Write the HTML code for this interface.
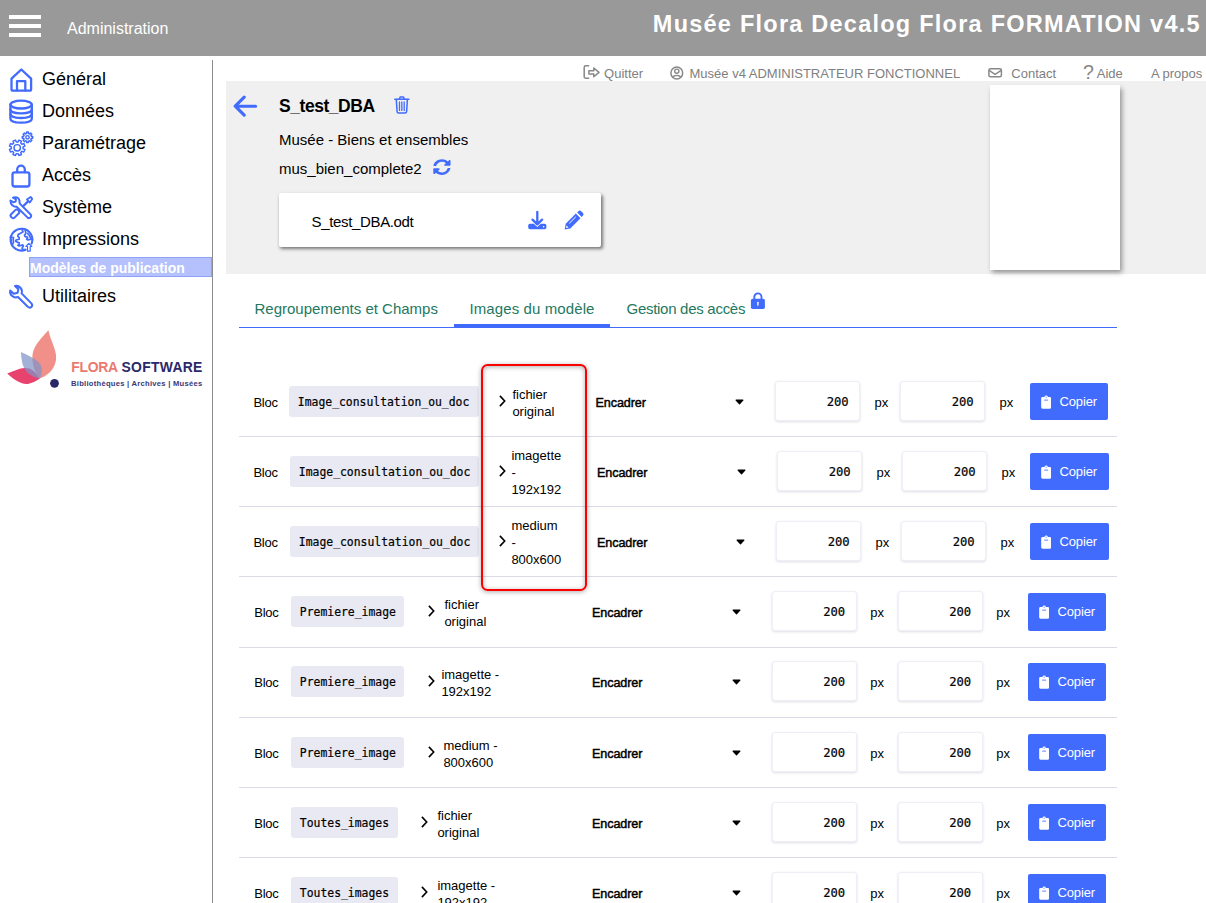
<!DOCTYPE html>
<html lang="fr">
<head>
<meta charset="utf-8">
<title>Administration - Modèles de publication</title>
<style>
*{box-sizing:border-box;margin:0;padding:0}
html,body{width:1206px;height:903px;overflow:hidden;background:#fff}
body{position:relative;font-family:"Liberation Sans",sans-serif;color:#000}
.abs{position:absolute;white-space:nowrap}
#hdr{left:0;top:0;width:1206px;height:56px;background:#999}
#hdr .bar{position:absolute;left:9px;width:32px;height:4px;background:#fff}
#adm{left:67px;top:19px;font-size:16px;color:#fff;line-height:20px}
#ttl{right:5.2px;top:8px;font-size:23.5px;font-weight:bold;color:#fff;line-height:32px;letter-spacing:1.24px}
#vline{left:212px;top:60px;width:1px;height:843px;background:#8c8c8c}
.mi{left:42px;font-size:18px;line-height:22px;color:#000}
#sel{left:29px;top:257px;width:183px;height:20px;background:#b4c1fc;border:1px solid #8ea3f7;color:#fff;font-weight:bold;font-size:14px;line-height:21px;padding-left:0}
.top{top:66px;font-size:13px;color:#808080;line-height:16px}
#gbox{left:226px;top:81px;width:980px;height:192.5px;background:#f0f0f0}
#wbox{left:990px;top:85px;width:130px;height:185px;background:#fff;box-shadow:2px 2.5px 5px rgba(0,0,0,.4)}
#card{left:279px;top:193px;width:322px;height:53.5px;background:#fff;border-radius:2px;box-shadow:1.5px 2px 3.5px rgba(0,0,0,.5)}
.tab{top:299px;font-size:15px;color:#23795f;line-height:20px}
#tline{left:239px;top:327px;width:878px;height:1px;background:#416bfd}
#tact{left:454px;top:323.5px;width:156px;height:4px;background:#416bfd}
.row{position:absolute;left:239px;width:878px;height:71px;border-bottom:1px solid #dcdce8}
.row .a{position:absolute;white-space:nowrap;font-size:13px;line-height:17px}
.row .enc{font-size:12.6px;letter-spacing:-0.1px;-webkit-text-stroke:.45px #000}
.row .code{background:#e9e9f4;border-radius:3px;height:31px;line-height:32.4px;font-family:"DejaVu Sans Mono","Liberation Mono",monospace;font-size:11.4px;padding:0 8.85px;-webkit-text-stroke:.2px #000}
.row .inp{background:#fff;border:1px solid #efeff8;border-radius:3px;width:85px;height:40px;box-shadow:0 1px 2.5px rgba(50,50,93,.16);font-family:"DejaVu Sans Mono","Liberation Mono",monospace;font-size:12.2px;line-height:41.1px;text-align:right;padding-right:10.5px;-webkit-text-stroke:.2px #000}
.row .btn{background:#416bfd;color:#fff;height:37px;border-radius:2px;font-size:13px;line-height:38.4px;padding-left:29.5px;letter-spacing:-0.15px}
.chv{position:absolute}
.clip{position:absolute;left:10.5px;top:12px}
#red{left:480.5px;top:364px;width:106.5px;height:226.7px;border:2.4px solid #ff0000;border-radius:6.5px;box-shadow:0 1px 5px rgba(0,0,0,.32),inset 0 1px 5px rgba(0,0,0,.32)}
.flo{font-weight:bold;font-size:13.9px;line-height:16px;top:358.8px}
</style>
</head>
<body>
<div id="hdr" class="abs">
  <div class="bar" style="top:15px"></div><div class="bar" style="top:24px"></div><div class="bar" style="top:33px"></div>
  <div id="adm" class="abs">Administration</div>
  <div id="ttl" class="abs">Musée Flora Decalog Flora FORMATION v4.5</div>
</div>
<div id="vline" class="abs"></div>
<svg class="abs" style="left:0;top:56px" width="212" height="344" viewBox="0 56 212 344" fill="none" stroke="#416bfd" stroke-width="2.3" stroke-linejoin="round" stroke-linecap="round">
<!-- home -->
<path d="M11.5 78.6 L21.3 69.5 L31.1 78.6 V89.2 a1.4 1.4 0 0 1 -1.4 1.4 H12.9 a1.4 1.4 0 0 1 -1.4 -1.4 Z"/>
<path d="M17 90.4 V81.2 H25.3 V90.4"/>
<!-- database -->
<ellipse cx="21.1" cy="104.6" rx="10.7" ry="3.9"/>
<path d="M10.4 104.6 V118.8 C10.4 124 31.8 124 31.8 118.8 V104.6"/>
<path d="M10.4 109.4 C10.4 114.6 31.8 114.6 31.8 109.4"/>
<path d="M10.4 114.1 C10.4 119.3 31.8 119.3 31.8 114.1"/>
<!-- gears -->
<g stroke-width="1.45">
<path d="M23.04 148.63 L24.91 149.52 L23.87 152.03 L21.92 151.34 L20.74 152.52 L21.43 154.47 L18.92 155.51 L18.03 153.64 L16.37 153.64 L15.48 155.51 L12.97 154.47 L13.66 152.52 L12.48 151.34 L10.53 152.03 L9.49 149.52 L11.36 148.63 L11.36 146.97 L9.49 146.08 L10.53 143.57 L12.48 144.26 L13.66 143.08 L12.97 141.13 L15.48 140.09 L16.37 141.96 L18.03 141.96 L18.92 140.09 L21.43 141.13 L20.74 143.08 L21.92 144.26 L23.87 143.57 L24.91 146.08 L23.04 146.97Z"/>
<circle cx="17.2" cy="147.8" r="3.2"/>
<path d="M31.28 136.33 L32.72 136.39 L32.72 138.21 L31.28 138.27 L30.86 139.29 L31.84 140.35 L30.55 141.64 L29.49 140.66 L28.47 141.08 L28.41 142.52 L26.59 142.52 L26.53 141.08 L25.51 140.66 L24.45 141.64 L23.16 140.35 L24.14 139.29 L23.72 138.27 L22.28 138.21 L22.28 136.39 L23.72 136.33 L24.14 135.31 L23.16 134.25 L24.45 132.96 L25.51 133.94 L26.53 133.52 L26.59 132.08 L28.41 132.08 L28.47 133.52 L29.49 133.94 L30.55 132.96 L31.84 134.25 L30.86 135.31Z"/>
<circle cx="27.5" cy="137.3" r="1.7"/>
</g>
<!-- lock -->
<rect x="12.5" y="172.4" width="16.9" height="14.1" rx="2.2"/>
<path d="M17.2 172.2 V169.6 a3.8 3.9 0 0 1 7.6 0 V172.2"/>
<!-- tools -->
<g stroke-width="2">
<path d="M30.6 196.9 L32.2 198.9 L29.8 202.5 L26.9 199.4 Z" stroke-width="1.8"/>
<path d="M28 201.4 L22.6 206.8" stroke-width="2.3"/>
<rect x="-2.4" y="0" width="4.8" height="9.6" rx="1.9" transform="translate(18.3 210.5) rotate(45)"/>
<path d="M13 197.6 C15.5 196.6 18.6 197.2 19.4 200.4 C19.7 201.6 19.4 202.6 19.8 203.6 L30.4 214.2 C32.4 216.4 29.6 219.4 27.4 217.4 L16.6 206.8 C13.5 207.2 10.4 204.6 10.4 200.6 L13.4 202.2 L15.6 201.6 L16 199.4 Z" fill="#fff"/>
</g>
<!-- globe -->
<path d="M31.6 243.6 A10.9 10.9 0 1 0 25.6 249.7" stroke-width="2.1"/>
<g stroke-width="1.7">
<path d="M22 229.6 L23.1 231.8 L20.6 233.2 L18.1 234.6 L17.8 236.1 L19.2 237.8 L19.2 239.2 L16 240 L15.6 241 L17.1 242.1 L19.2 242.8 L19.2 244.2 L17.8 245.3 L19.2 246 L22.7 244.9 L23.4 246 L22 248.1 L22.7 249.2 L25.2 249.9"/>
<path d="M25.2 230.6 L25.9 233.2 L24.5 235.3 L24.9 236.4 L27.3 237.1 L27.7 238.2 L26.6 239.2 L28 240 L31.6 239.2"/>
<path d="M27.5 233.4 C29 234.6 30 236.2 30.6 238.2"/>
<path d="M10.4 237.1 L13.5 237.5 L13.2 239.6 L13.5 242.4 L12.1 245.4"/>
<path d="M11.4 239.4 V242.6" stroke-width="1.3"/>
</g>
<path d="M27.5 251.2 V246.5 H25.9 L28.85 243.3 L31.8 246.5 H30.2 V251.2 Z" fill="#fff" stroke-width="1.2"/>
<!-- wrench -->
<path d="M10.2 290.4 L13.8 293.8 L17.6 292.8 L18.4 289.2 L15 286 C19.4 285.2 23 289 21.6 293.4 L31.4 303.4 C33.6 306 30.4 309 27.8 306.8 L18 297 C13.6 298.6 9.4 295 10.2 290.4 Z" stroke-width="2"/>
</svg>
<div class="abs mi" style="top:68px">Général</div>
<div class="abs mi" style="top:100px">Données</div>
<div class="abs mi" style="top:132px">Paramétrage</div>
<div class="abs mi" style="top:164px">Accès</div>
<div class="abs mi" style="top:196px">Système</div>
<div class="abs mi" style="top:228px">Impressions</div>
<div id="sel" class="abs">Modèles de publication</div>
<div class="abs mi" style="top:285px">Utilitaires</div>
<svg class="abs" style="left:0;top:326px" width="212" height="70" viewBox="0 326 212 70">
<path d="M7.2 373.5 C10 372.4 13 371 16.4 370 C19.5 368.8 22 368 24.6 368 C28 368 30.5 368.8 32.8 370.4 C35 372 36.5 373.6 37.7 375.3 C38.6 376.6 39.3 377.8 39.8 378.6 C38 380 36.4 381 34.4 381.8 C32.3 382.8 30 383.6 27.9 383.9 C25.5 384.1 23.5 383.7 21.3 383 C18.4 382 15.7 380.4 13.1 378.6 C11 377 9 375.2 7.2 373.5 Z" fill="#e8426f"/>
<path d="M48.4 330.2 C46 333 43.5 335.6 41 338.4 C38.4 341.6 36 344.8 34.4 348.2 C33.2 350.8 32.5 353.6 32.4 356.4 C32.3 358.6 32.4 360.8 32.8 363 C33.4 366.4 34.5 369.8 36 372.8 C37 374.8 38.3 376.8 39.8 378.6 C42.8 377.4 45.8 375.8 48.4 373.6 C50.8 371.6 52.8 369.2 54.1 366.3 C55.3 363.8 56 361 56.1 358 C56.2 355.2 55.7 352.5 54.9 349.9 C53.8 346 52.3 342.2 50.8 338.4 C49.9 335.8 49.1 333 48.4 330.2 Z" fill="#f09088"/>
<path d="M20.9 351.9 C24.8 353.6 29 355.6 32.8 358 C35.3 359.4 37.5 361 39.3 363 C40.8 364.6 41.6 366.6 41.8 368.7 C42 370.6 41.8 372.6 41.4 374.5 C41 376 40.4 377.4 39.8 378.6 C36.6 378 33.6 377 31.1 375.3 C28.3 373.6 26.2 371.4 24.6 368.7 C23.1 366 22.2 363 21.7 359.7 C21.3 357.2 21 354.6 20.9 351.9 Z" fill="#7f93c8" fill-opacity=".72"/>
<circle cx="54.5" cy="383.3" r="4.4" fill="#2a2869"/>
</svg>
<div class="abs flo" style="left:71.3px;color:#ea7a70;letter-spacing:-0.3px">FLORA</div>
<div class="abs flo" style="left:121.5px;color:#2a2869;letter-spacing:.3px">SOFTWARE</div>
<div class="abs" style="left:71px;top:378.5px;font-size:7.6px;line-height:10px;font-weight:bold;color:#3a3878;letter-spacing:.27px">Bibliothèques | Archives | Musées</div>

<svg class="abs" style="left:580px;top:62px" width="520" height="20" viewBox="580 62 520 20" fill="none" stroke="#888" stroke-width="1.3" stroke-linejoin="round" stroke-linecap="round">
<path d="M588.6 65.8 H585.8 a1.6 1.6 0 0 0 -1.6 1.6 V76.7 a1.6 1.6 0 0 0 1.6 1.6 H588.6" stroke-width="1.5"/>
<path d="M588.9 70.7 H593.8 V68 L599 72.4 L593.8 76.8 V74.1 H588.9 Z" stroke-width="1.5"/>
<circle cx="676.8" cy="73" r="5.9" stroke-width="1.5"/>
<circle cx="676.8" cy="71.2" r="2.1" stroke-width="1.4"/>
<path d="M673 77.3 C674 74.7 679.6 74.7 680.6 77.3" stroke-width="1.4"/>
<rect x="988.9" y="68.8" width="12.5" height="8" rx="1.5" stroke-width="1.5"/>
<path d="M989.5 70.6 L995.1 74.4 L1000.8 70.6" stroke-width="1.4"/>
</svg>
<div class="abs top" style="left:604.1px">Quitter</div>
<div class="abs top" style="left:689.5px">Musée v4 ADMINISTRATEUR FONCTIONNEL</div>
<div class="abs top" style="left:1011.3px">Contact</div>
<div class="abs" style="left:1083px;top:60px;font-size:19.6px;line-height:24px;color:#888">?</div>
<div class="abs top" style="left:1096.8px">Aide</div>
<div class="abs top" style="left:1151px">A propos</div>

<div id="gbox" class="abs"></div>
<div id="wbox" class="abs"></div>
<svg class="abs" style="left:230px;top:92px" width="230" height="90" viewBox="230 92 230 90" fill="none" stroke="#416bfd" stroke-linejoin="round" stroke-linecap="round">
<path d="M255.6 106.2 H236 M244.2 97.2 L235.2 106.2 L244.2 115.2" stroke-width="3.1"/>
<g stroke-width="1.5">
<path d="M396.3 99.6 L397.1 111.6 a1.5 1.5 0 0 0 1.5 1.4 H405.1 a1.5 1.5 0 0 0 1.5 -1.4 L407.4 99.6"/>
<path d="M394.8 99.2 H408.9 M399.3 99 L400.3 96.9 H403.4 L404.4 99"/>
<path d="M399.5 102 V110.4 M401.85 102 V110.4 M404.2 102 V110.4" stroke-width="1.3"/>
</g>
</svg>
<svg class="abs" style="left:433.2px;top:159.3px" width="17.8" height="16.2" viewBox="0 0 512 512" preserveAspectRatio="none"><path fill="#416bfd" d="M370.72 133.28C339.458 104.008 298.888 87.962 255.848 88c-77.458.068-144.328 53.178-162.791 126.85-1.344 5.363-6.122 9.15-11.651 9.15H24.103c-7.498 0-13.194-6.807-11.807-14.176C33.933 94.924 134.813 8 256 8c66.448 0 126.791 26.136 171.315 68.685L463.03 40.97C478.149 25.851 504 36.559 504 57.941V192c0 13.255-10.745 24-24 24H345.941c-21.382 0-32.09-25.851-16.971-40.971l41.75-41.749zM32 296h134.059c21.382 0 32.09 25.851 16.971 40.971l-41.75 41.75c31.262 29.273 71.835 45.319 114.876 45.28 77.418-.07 144.315-53.144 162.787-126.849 1.344-5.363 6.122-9.15 11.651-9.15h57.304c7.498 0 13.194 6.807 11.807 14.176C478.067 417.076 377.187 504 256 504c-66.448 0-126.791-26.136-171.315-68.685L48.97 471.03C33.851 486.149 8 475.441 8 454.059V320c0-13.255 10.745-24 24-24z"/></svg>
<div class="abs" style="left:279px;top:94.5px;font-size:17.5px;font-weight:bold;line-height:22px;letter-spacing:-0.45px">S_test_DBA</div>
<div class="abs" style="left:279px;top:131px;font-size:15px;line-height:18px">Musée - Biens et ensembles</div>
<div class="abs" style="left:279px;top:159.6px;font-size:15px;line-height:18px">mus_bien_complete2</div>
<div id="card" class="abs"><div class="abs" style="left:32.6px;top:19.7px;font-size:15px;line-height:18px;letter-spacing:-0.35px">S_test_DBA.odt</div>
<svg class="abs" style="left:246px;top:15px" width="64" height="24" viewBox="525 208 64 24">
<path d="M537.3 212 V224 M532.5 219.6 L537.3 224.4 L542.1 219.6" fill="none" stroke="#416bfd" stroke-width="2.3" stroke-linecap="round" stroke-linejoin="round"/>
<path d="M530 223.8 H533.8 L537.3 227 L540.8 223.8 H544.6 a1.8 1.8 0 0 1 1.8 1.8 V227.4 a1.8 1.8 0 0 1 -1.8 1.8 H530 a1.8 1.8 0 0 1 -1.8 -1.8 V225.6 a1.8 1.8 0 0 1 1.8 -1.8 Z" fill="#416bfd"/>
<circle cx="543.6" cy="226.7" r=".8" fill="#fff"/>
<path d="M564.7 229.4 L565.7 223.8 L575.9 213.6 L580.5 218.2 L570.3 228.4 Z M577.2 212.5 L578.6 211.1 a1.7 1.7 0 0 1 2.4 0 L583 213.1 a1.7 1.7 0 0 1 0 2.4 L581.6 216.9 Z" fill="#416bfd"/>
<path d="M569.2 223.4 L575.8 216.8" stroke="#fff" stroke-width="1" fill="none"/>
<path d="M566.5 225.5 L568.5 227.5 L566 228.1 Z" fill="#fff"/>
</svg>
</div>

<div class="abs tab" style="left:254.5px">Regroupements et Champs</div>
<div class="abs tab" style="left:469.5px;letter-spacing:.1px">Images du modèle</div>
<div class="abs tab" style="left:626.5px;letter-spacing:-0.28px">Gestion des accès</div>
<svg class="abs" style="left:750px;top:292px" width="16" height="18" viewBox="750 292 16 18">
<rect x="750.9" y="298.8" width="14" height="10.1" rx="1.7" fill="#416bfd"/>
<path d="M754.3 299.5 V297 a3.6 3.6 0 0 1 7.2 0 V299.5" fill="none" stroke="#416bfd" stroke-width="1.9"/>
<rect x="757.2" y="301.7" width="1.4" height="4" rx=".6" fill="#fff"/>
</svg>
<div id="tline" class="abs"></div>
<div id="tact" class="abs"></div>

<div id="rows">
<div class="row" style="top:366px;height:71px">
<div class="a" style="left:14.5px;top:28px;letter-spacing:-0.3px">Bloc</div>
<div class="a code" style="left:50px;top:20px;width:190px">Image_consultation_ou_doc</div>
<svg class="chv" style="left:259.5px;top:29.4px" width="8" height="12" viewBox="0 0 8 12"><path d="M0.9 0.9 L5.7 6 L0.9 11.1" fill="none" stroke="#000" stroke-width="1.6"/></svg>
<div class="a txt" style="left:273.4px;top:19.6px">fichier<br>original</div>
<div class="a enc" style="left:356.5px;top:28.7px">Encadrer</div>
<svg class="chv" style="left:496.4px;top:32.5px" width="9" height="6" viewBox="0 0 9 6"><path d="M1 0.6h7a.5 .5 0 0 1 .4 .8L4.9 5.2a.55 .55 0 0 1-.8 0L.6 1.4a.5 .5 0 0 1 .4-.8z" fill="#000"/></svg>
<div class="a inp" style="left:536.2px;top:15px">200</div>
<div class="a" style="left:635.5999999999999px;top:27.5px">px</div>
<div class="a inp" style="left:661.2px;top:15px">200</div>
<div class="a" style="left:760.5999999999999px;top:27.5px">px</div>
<div class="a btn" style="left:791px;top:17px;width:78px;height:37px"><svg class="clip" width="10.3" height="14" viewBox="0 0 11 14" preserveAspectRatio="none"><path d="M1.6 1.9h2a2 2 0 0 1 3.8 0h2a1.4 1.4 0 0 1 1.4 1.4v9a1.4 1.4 0 0 1-1.4 1.4h-7.8a1.4 1.4 0 0 1-1.4-1.4v-9a1.4 1.4 0 0 1 1.4-1.4z" fill="#fff"/><rect x="3.3" y="4.6" width="4.4" height="1.1" rx=".4" fill="#7f9bff"/><circle cx="5.5" cy="2.2" r=".7" fill="#7f9bff"/></svg>Copier</div>
</div>
<div class="row" style="top:436px;height:71px">
<div class="a" style="left:14.5px;top:28px;letter-spacing:-0.3px">Bloc</div>
<div class="a code" style="left:51px;top:20px;width:189px">Image_consultation_ou_doc</div>
<svg class="chv" style="left:259.5px;top:29.4px" width="8" height="12" viewBox="0 0 8 12"><path d="M0.9 0.9 L5.7 6 L0.9 11.1" fill="none" stroke="#000" stroke-width="1.6"/></svg>
<div class="a txt" style="left:272.4px;top:11.1px">imagette<br>-<br>192x192</div>
<div class="a enc" style="left:358px;top:28.7px">Encadrer</div>
<svg class="chv" style="left:498.4px;top:32.5px" width="9" height="6" viewBox="0 0 9 6"><path d="M1 0.6h7a.5 .5 0 0 1 .4 .8L4.9 5.2a.55 .55 0 0 1-.8 0L.6 1.4a.5 .5 0 0 1 .4-.8z" fill="#000"/></svg>
<div class="a inp" style="left:538.2px;top:15px">200</div>
<div class="a" style="left:637.5999999999999px;top:27.5px">px</div>
<div class="a inp" style="left:663.2px;top:15px">200</div>
<div class="a" style="left:762.5999999999999px;top:27.5px">px</div>
<div class="a btn" style="left:791px;top:17px;width:79px;height:37px"><svg class="clip" width="10.3" height="14" viewBox="0 0 11 14" preserveAspectRatio="none"><path d="M1.6 1.9h2a2 2 0 0 1 3.8 0h2a1.4 1.4 0 0 1 1.4 1.4v9a1.4 1.4 0 0 1-1.4 1.4h-7.8a1.4 1.4 0 0 1-1.4-1.4v-9a1.4 1.4 0 0 1 1.4-1.4z" fill="#fff"/><rect x="3.3" y="4.6" width="4.4" height="1.1" rx=".4" fill="#7f9bff"/><circle cx="5.5" cy="2.2" r=".7" fill="#7f9bff"/></svg>Copier</div>
</div>
<div class="row" style="top:506px;height:71px">
<div class="a" style="left:14.5px;top:28px;letter-spacing:-0.3px">Bloc</div>
<div class="a code" style="left:51px;top:20px;width:189px">Image_consultation_ou_doc</div>
<svg class="chv" style="left:259.5px;top:29.4px" width="8" height="12" viewBox="0 0 8 12"><path d="M0.9 0.9 L5.7 6 L0.9 11.1" fill="none" stroke="#000" stroke-width="1.6"/></svg>
<div class="a txt" style="left:272.4px;top:11.1px">medium<br>-<br>800x600</div>
<div class="a enc" style="left:358px;top:28.7px">Encadrer</div>
<svg class="chv" style="left:497.4px;top:32.5px" width="9" height="6" viewBox="0 0 9 6"><path d="M1 0.6h7a.5 .5 0 0 1 .4 .8L4.9 5.2a.55 .55 0 0 1-.8 0L.6 1.4a.5 .5 0 0 1 .4-.8z" fill="#000"/></svg>
<div class="a inp" style="left:537.2px;top:15px">200</div>
<div class="a" style="left:636.5999999999999px;top:27.5px">px</div>
<div class="a inp" style="left:662.2px;top:15px">200</div>
<div class="a" style="left:761.5999999999999px;top:27.5px">px</div>
<div class="a btn" style="left:791px;top:17px;width:79px;height:37px"><svg class="clip" width="10.3" height="14" viewBox="0 0 11 14" preserveAspectRatio="none"><path d="M1.6 1.9h2a2 2 0 0 1 3.8 0h2a1.4 1.4 0 0 1 1.4 1.4v9a1.4 1.4 0 0 1-1.4 1.4h-7.8a1.4 1.4 0 0 1-1.4-1.4v-9a1.4 1.4 0 0 1 1.4-1.4z" fill="#fff"/><rect x="3.3" y="4.6" width="4.4" height="1.1" rx=".4" fill="#7f9bff"/><circle cx="5.5" cy="2.2" r=".7" fill="#7f9bff"/></svg>Copier</div>
</div>
<div class="row" style="top:576px;height:72px">
<div class="a" style="left:15.300000000000011px;top:28px;letter-spacing:-0.3px">Bloc</div>
<div class="a code" style="left:52px;top:20px;width:113px">Premiere_image</div>
<svg class="chv" style="left:188.7px;top:29.4px" width="8" height="12" viewBox="0 0 8 12"><path d="M0.9 0.9 L5.7 6 L0.9 11.1" fill="none" stroke="#000" stroke-width="1.6"/></svg>
<div class="a txt" style="left:205.4px;top:19.6px">fichier<br>original</div>
<div class="a enc" style="left:353px;top:28.7px">Encadrer</div>
<svg class="chv" style="left:493.19999999999993px;top:32.5px" width="9" height="6" viewBox="0 0 9 6"><path d="M1 0.6h7a.5 .5 0 0 1 .4 .8L4.9 5.2a.55 .55 0 0 1-.8 0L.6 1.4a.5 .5 0 0 1 .4-.8z" fill="#000"/></svg>
<div class="a inp" style="left:532.7px;top:15px">200</div>
<div class="a" style="left:631.3px;top:27.5px">px</div>
<div class="a inp" style="left:658.7px;top:15px">200</div>
<div class="a" style="left:757.3px;top:27.5px">px</div>
<div class="a btn" style="left:789px;top:17px;width:78px;height:38px"><svg class="clip" width="10.3" height="14" viewBox="0 0 11 14" preserveAspectRatio="none"><path d="M1.6 1.9h2a2 2 0 0 1 3.8 0h2a1.4 1.4 0 0 1 1.4 1.4v9a1.4 1.4 0 0 1-1.4 1.4h-7.8a1.4 1.4 0 0 1-1.4-1.4v-9a1.4 1.4 0 0 1 1.4-1.4z" fill="#fff"/><rect x="3.3" y="4.6" width="4.4" height="1.1" rx=".4" fill="#7f9bff"/><circle cx="5.5" cy="2.2" r=".7" fill="#7f9bff"/></svg>Copier</div>
</div>
<div class="row" style="top:646px;height:72px">
<div class="a" style="left:15.300000000000011px;top:28px;letter-spacing:-0.3px">Bloc</div>
<div class="a code" style="left:52px;top:20px;width:113px">Premiere_image</div>
<svg class="chv" style="left:188.7px;top:29.4px" width="8" height="12" viewBox="0 0 8 12"><path d="M0.9 0.9 L5.7 6 L0.9 11.1" fill="none" stroke="#000" stroke-width="1.6"/></svg>
<div class="a txt" style="left:202.4px;top:19.6px">imagette -<br>192x192</div>
<div class="a enc" style="left:353px;top:28.7px">Encadrer</div>
<svg class="chv" style="left:493.19999999999993px;top:32.5px" width="9" height="6" viewBox="0 0 9 6"><path d="M1 0.6h7a.5 .5 0 0 1 .4 .8L4.9 5.2a.55 .55 0 0 1-.8 0L.6 1.4a.5 .5 0 0 1 .4-.8z" fill="#000"/></svg>
<div class="a inp" style="left:532.7px;top:15px">200</div>
<div class="a" style="left:631.3px;top:27.5px">px</div>
<div class="a inp" style="left:658.7px;top:15px">200</div>
<div class="a" style="left:757.3px;top:27.5px">px</div>
<div class="a btn" style="left:789px;top:17px;width:78px;height:38px"><svg class="clip" width="10.3" height="14" viewBox="0 0 11 14" preserveAspectRatio="none"><path d="M1.6 1.9h2a2 2 0 0 1 3.8 0h2a1.4 1.4 0 0 1 1.4 1.4v9a1.4 1.4 0 0 1-1.4 1.4h-7.8a1.4 1.4 0 0 1-1.4-1.4v-9a1.4 1.4 0 0 1 1.4-1.4z" fill="#fff"/><rect x="3.3" y="4.6" width="4.4" height="1.1" rx=".4" fill="#7f9bff"/><circle cx="5.5" cy="2.2" r=".7" fill="#7f9bff"/></svg>Copier</div>
</div>
<div class="row" style="top:717px;height:71px">
<div class="a" style="left:15.300000000000011px;top:28px;letter-spacing:-0.3px">Bloc</div>
<div class="a code" style="left:52px;top:20px;width:113px">Premiere_image</div>
<svg class="chv" style="left:188.7px;top:29.4px" width="8" height="12" viewBox="0 0 8 12"><path d="M0.9 0.9 L5.7 6 L0.9 11.1" fill="none" stroke="#000" stroke-width="1.6"/></svg>
<div class="a txt" style="left:204.4px;top:19.6px">medium -<br>800x600</div>
<div class="a enc" style="left:353px;top:28.7px">Encadrer</div>
<svg class="chv" style="left:493.19999999999993px;top:32.5px" width="9" height="6" viewBox="0 0 9 6"><path d="M1 0.6h7a.5 .5 0 0 1 .4 .8L4.9 5.2a.55 .55 0 0 1-.8 0L.6 1.4a.5 .5 0 0 1 .4-.8z" fill="#000"/></svg>
<div class="a inp" style="left:532.7px;top:15px">200</div>
<div class="a" style="left:631.3px;top:27.5px">px</div>
<div class="a inp" style="left:658.7px;top:15px">200</div>
<div class="a" style="left:757.3px;top:27.5px">px</div>
<div class="a btn" style="left:789px;top:17px;width:78px;height:37px"><svg class="clip" width="10.3" height="14" viewBox="0 0 11 14" preserveAspectRatio="none"><path d="M1.6 1.9h2a2 2 0 0 1 3.8 0h2a1.4 1.4 0 0 1 1.4 1.4v9a1.4 1.4 0 0 1-1.4 1.4h-7.8a1.4 1.4 0 0 1-1.4-1.4v-9a1.4 1.4 0 0 1 1.4-1.4z" fill="#fff"/><rect x="3.3" y="4.6" width="4.4" height="1.1" rx=".4" fill="#7f9bff"/><circle cx="5.5" cy="2.2" r=".7" fill="#7f9bff"/></svg>Copier</div>
</div>
<div class="row" style="top:787px;height:71px">
<div class="a" style="left:15.300000000000011px;top:28px;letter-spacing:-0.3px">Bloc</div>
<div class="a code" style="left:52px;top:20px;width:107px">Toutes_images</div>
<svg class="chv" style="left:181.8px;top:29.4px" width="8" height="12" viewBox="0 0 8 12"><path d="M0.9 0.9 L5.7 6 L0.9 11.1" fill="none" stroke="#000" stroke-width="1.6"/></svg>
<div class="a txt" style="left:198.4px;top:19.6px">fichier<br>original</div>
<div class="a enc" style="left:353px;top:28.7px">Encadrer</div>
<svg class="chv" style="left:493.19999999999993px;top:32.5px" width="9" height="6" viewBox="0 0 9 6"><path d="M1 0.6h7a.5 .5 0 0 1 .4 .8L4.9 5.2a.55 .55 0 0 1-.8 0L.6 1.4a.5 .5 0 0 1 .4-.8z" fill="#000"/></svg>
<div class="a inp" style="left:532.7px;top:15px">200</div>
<div class="a" style="left:631.3px;top:27.5px">px</div>
<div class="a inp" style="left:658.7px;top:15px">200</div>
<div class="a" style="left:757.3px;top:27.5px">px</div>
<div class="a btn" style="left:789px;top:17px;width:78px;height:37px"><svg class="clip" width="10.3" height="14" viewBox="0 0 11 14" preserveAspectRatio="none"><path d="M1.6 1.9h2a2 2 0 0 1 3.8 0h2a1.4 1.4 0 0 1 1.4 1.4v9a1.4 1.4 0 0 1-1.4 1.4h-7.8a1.4 1.4 0 0 1-1.4-1.4v-9a1.4 1.4 0 0 1 1.4-1.4z" fill="#fff"/><rect x="3.3" y="4.6" width="4.4" height="1.1" rx=".4" fill="#7f9bff"/><circle cx="5.5" cy="2.2" r=".7" fill="#7f9bff"/></svg>Copier</div>
</div>
<div class="row" style="top:857px;height:71px">
<div class="a" style="left:15.300000000000011px;top:28px;letter-spacing:-0.3px">Bloc</div>
<div class="a code" style="left:52px;top:20px;width:107px">Toutes_images</div>
<svg class="chv" style="left:181.8px;top:29.4px" width="8" height="12" viewBox="0 0 8 12"><path d="M0.9 0.9 L5.7 6 L0.9 11.1" fill="none" stroke="#000" stroke-width="1.6"/></svg>
<div class="a txt" style="left:198.4px;top:19.6px">imagette -<br>192x192</div>
<div class="a enc" style="left:353px;top:28.7px">Encadrer</div>
<svg class="chv" style="left:493.19999999999993px;top:32.5px" width="9" height="6" viewBox="0 0 9 6"><path d="M1 0.6h7a.5 .5 0 0 1 .4 .8L4.9 5.2a.55 .55 0 0 1-.8 0L.6 1.4a.5 .5 0 0 1 .4-.8z" fill="#000"/></svg>
<div class="a inp" style="left:532.7px;top:15px">200</div>
<div class="a" style="left:631.3px;top:27.5px">px</div>
<div class="a inp" style="left:658.7px;top:15px">200</div>
<div class="a" style="left:757.3px;top:27.5px">px</div>
<div class="a btn" style="left:789px;top:17px;width:78px;height:37px"><svg class="clip" width="10.3" height="14" viewBox="0 0 11 14" preserveAspectRatio="none"><path d="M1.6 1.9h2a2 2 0 0 1 3.8 0h2a1.4 1.4 0 0 1 1.4 1.4v9a1.4 1.4 0 0 1-1.4 1.4h-7.8a1.4 1.4 0 0 1-1.4-1.4v-9a1.4 1.4 0 0 1 1.4-1.4z" fill="#fff"/><rect x="3.3" y="4.6" width="4.4" height="1.1" rx=".4" fill="#7f9bff"/><circle cx="5.5" cy="2.2" r=".7" fill="#7f9bff"/></svg>Copier</div>
</div>
</div>
<div id="red" class="abs"></div>
</body>
</html>
